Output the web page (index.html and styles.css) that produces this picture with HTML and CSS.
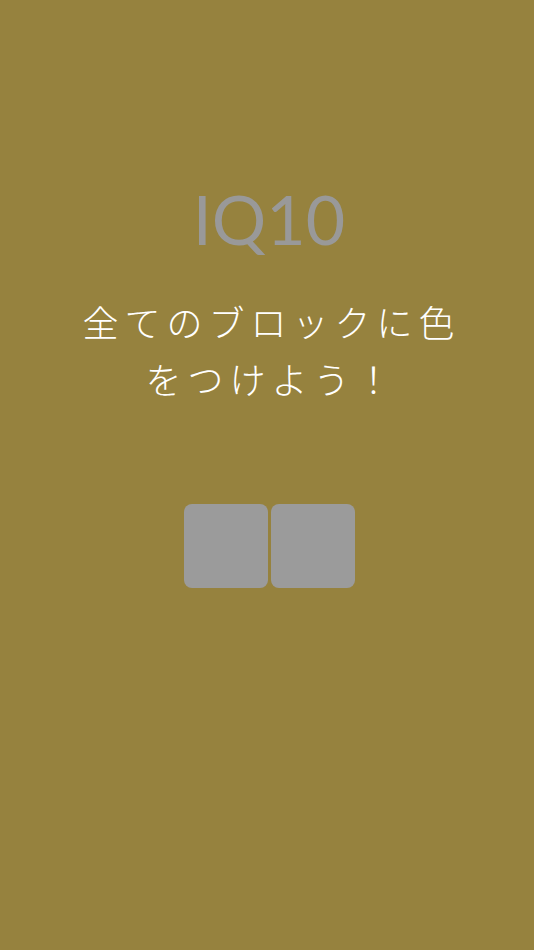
FILE: index.html
```html
<!DOCTYPE html>
<html lang="ja">
<head>
<meta charset="utf-8">
<link rel="stylesheet" href="styles.css">
</head>
<body>
<main class="screen">
  <h1 class="title">IQ10</h1>
  <p class="message">全てのブロックに色<br>をつけよう！</p>
  <div class="blocks">
    <div class="block"></div>
    <div class="block"></div>
  </div>
</main>
</body>
</html>
```
FILE: styles.css
```css
html, body {
  margin: 0;
  padding: 0;
  background: #96823e;
}
.screen {
  width: 534px;
  height: 950px;
  display: flex;
  flex-direction: column;
  align-items: center;
  padding-top: 177px;
  box-sizing: border-box;
}
.title {
  margin: 0;
  font-family: "Lato", "Liberation Sans", sans-serif;
  font-weight: 400;
  font-size: 68px;
  line-height: 84px;
  color: #999999;
  padding-left: 4px;
}
.message {
  margin: 32px 0 0;
  font-family: "Noto Sans CJK JP", sans-serif;
  font-weight: 300;
  font-size: 36px;
  line-height: 57px;
  letter-spacing: 6px;
  color: #ffffff;
  text-align: center;
  padding-left: 9px;
}
.blocks {
  display: flex;
  gap: 3px;
  margin-top: 97px;
  padding-left: 5px;
}
.block {
  width: 84px;
  height: 84px;
  border-radius: 8px;
  background: #9b9b9b;
}
```
